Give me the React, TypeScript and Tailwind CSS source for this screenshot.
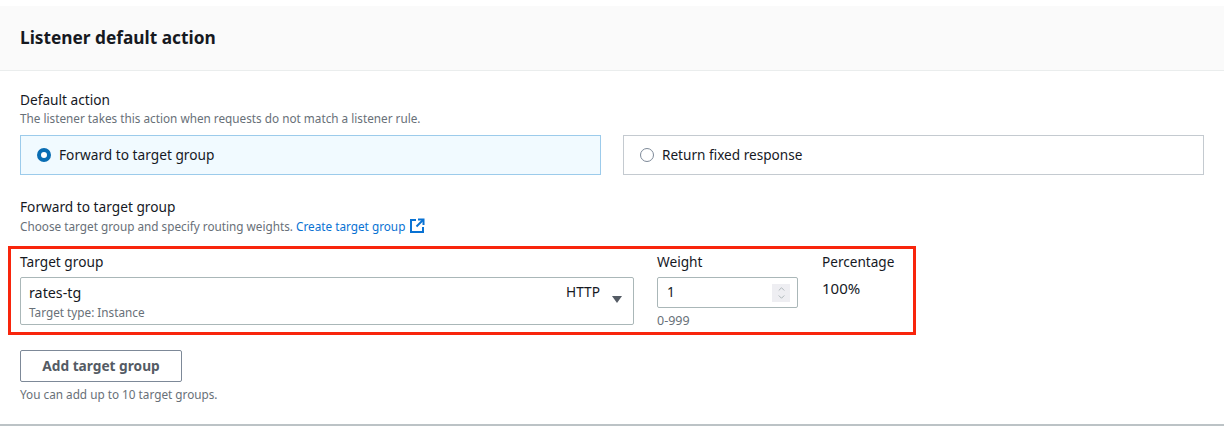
import React from 'react';
import { ChevronUp, ChevronDown } from 'lucide-react';

const font = { fontFamily: '"Noto Sans", sans-serif' };

function Radio({ checked }: { checked?: boolean }) {
  if (checked) {
    return <span className="w-[14px] h-[14px] rounded-full border-[4px] border-[#0a6db3] bg-white shrink-0" />;
  }
  return <span className="w-[14px] h-[14px] rounded-full border border-[#7d8998] bg-white shrink-0" />;
}

function ExternalIcon() {
  return (
    <svg width="16" height="16" viewBox="0 0 16 16" fill="none" stroke="#0972d3" strokeWidth="2" className="shrink-0">
      <path d="M7 2H2v12h12V9" />
      <path d="M9 1.5h5.5V7" />
      <path d="M14 2L7.5 8.5" />
    </svg>
  );
}

export default function App() {
  return (
    <div className="w-[1224px] h-[430px] bg-white overflow-hidden pt-[6px] text-[#16191f]" style={font}>
      <div className="h-[65px] bg-[#fafafa] border-b border-[#eaeded] flex items-center px-5">
        <h2 className="text-[17.3px] font-bold leading-none">Listener default action</h2>
      </div>

      <div className="px-5 pt-[21px]">
        <div className="text-[13.7px] leading-[16px]">Default action</div>
        <div className="text-[11.75px] leading-[14px] mt-[3px] text-[#687078]">
          The listener takes this action when requests do not match a listener rule.
        </div>

        <div className="grid grid-cols-2 gap-[22px] mt-[10px]">
          <div className="h-[40px] border border-[#9ccbeb] bg-[#f1faff] flex items-center gap-[8px] pl-[16px]">
            <Radio checked />
            <span className="text-[13.7px]">Forward to target group</span>
          </div>
          <div className="h-[40px] border border-[#c4cad0] flex items-center gap-[8px] pl-[16px]">
            <Radio />
            <span className="text-[13.6px]">Return fixed response</span>
          </div>
        </div>

        <div className="text-[13.7px] leading-[16px] mt-[24px]">Forward to target group</div>
        <div className="flex items-center text-[11.75px] leading-[14px] mt-[3px] text-[#687078]">
          <span>Choose target group and specify routing weights.</span>
          <span className="text-[#0972d3] ml-[3px]">Create target group</span>
          <span className="ml-[4px]"><ExternalIcon /></span>
        </div>

        <div className="w-[908px] h-[89px] -ml-[12px] mt-[12px] border-[3px] border-[#f8250c] pl-[9px] flex">
          <div className="w-[614px]">
            <div className="text-[13.7px] leading-[16px] mt-[5px]">Target group</div>
            <div className="h-[48px] mt-[7px] border border-[#aab7b8] rounded-[2px] flex pl-[8px] pr-[11px]">
              <div className="flex-1">
                <div className="text-[14.3px] leading-[16px] mt-[7px]">rates-tg</div>
                <div className="text-[11.75px] leading-[14px] mt-[4px] text-[#687078]">Target type: Instance</div>
              </div>
              <span className="text-[13.7px] leading-[16px] mt-[6px] mr-[12px]">HTTP</span>
              <svg width="10" height="7" viewBox="0 0 10 7" className="mt-[18px]">
                <path d="M0 0h10L5 7z" fill="#545b64" />
              </svg>
            </div>
          </div>

          <div className="w-[141px] ml-[23px]">
            <div className="text-[13.7px] leading-[16px] mt-[5px]">Weight</div>
            <div className="h-[31px] mt-[7px] border border-[#aab7b8] rounded-[2px] flex items-center justify-between pl-[9px] pr-[7px]">
              <span className="text-[13.7px]">1</span>
              <div className="w-[18px] h-[18px] bg-[#eeeef2] flex flex-col items-center justify-center text-[#879596]">
                <ChevronUp size={11} strokeWidth={1.5} className="-mb-[1px]" />
                <ChevronDown size={11} strokeWidth={1.5} className="-mt-[1px]" />
              </div>
            </div>
            <div className="text-[12.5px] leading-[14px] mt-[6px] text-[#687078]">0-999</div>
          </div>

          <div className="ml-[24px]">
            <div className="text-[13.6px] leading-[16px] mt-[5px]">Percentage</div>
            <div className="text-[15px] leading-[16px] mt-[10px]">100%</div>
          </div>
        </div>

        <button className="block w-[162px] h-[32px] mt-[15px] border border-[#7d8998] rounded-[2px] text-[13.7px] font-bold text-[#545b64]">
          Add target group
        </button>
        <div className="text-[11.75px] leading-[14px] mt-[5px] text-[#687078]">You can add up to 10 target groups.</div>
      </div>

      <div className="h-[2px] bg-[#bcc3c6] mt-[23px]" />
    </div>
  );
}
